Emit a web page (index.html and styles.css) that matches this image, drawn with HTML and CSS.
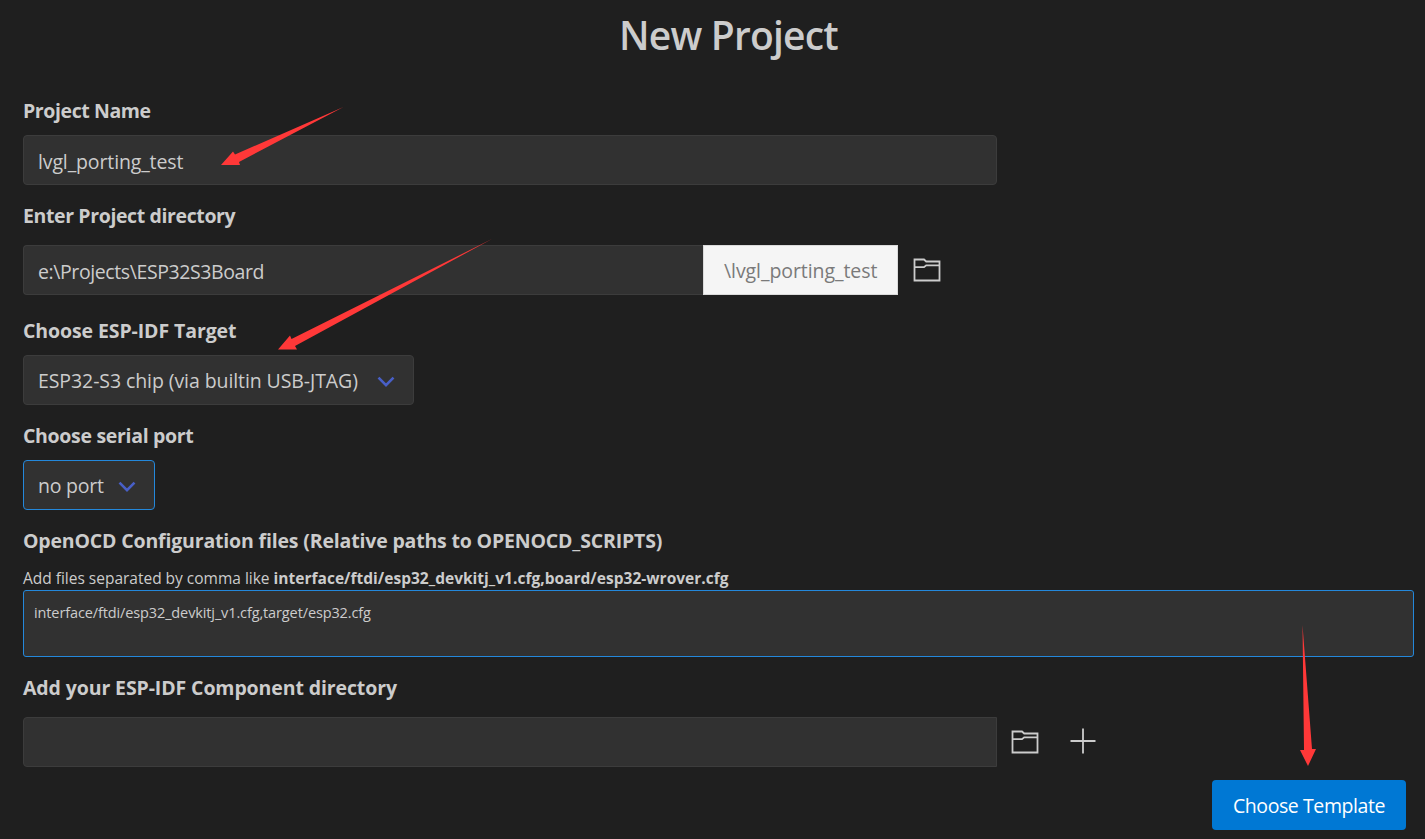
FILE: index.html
```html
<!DOCTYPE html>
<html lang="en">
<head>
<meta charset="utf-8">
<title>New Project</title>
<link rel="stylesheet" href="styles.css">
</head>
<body>
<main class="page">
  <h1 class="title"><span class="t-title">New Project</span></h1>
  <section class="field">
    <label class="label"><span class="t-name">Project Name</span></label>
    <div class="input wide"><span class="t-value">lvgl_porting_test</span></div>
  </section>
  <section class="field directory">
    <label class="label"><span class="t-dir">Enter Project directory</span></label>
    <div class="row">
      <div class="input path"><span class="t-path">e:\Projects\ESP32S3Board</span></div>
      <div class="suffix"><span class="t-suffix">\lvgl_porting_test</span></div>
      <svg class="folder" viewBox="0 0 28 24"><path d="M1.5 1.5H11L13.2 3.5H26.5V22.5H1.5ZM1.5 9.2H11L13.2 7.3H26.5"/></svg>
    </div>
  </section>
  <section class="field target">
    <label class="label"><span class="t-target">Choose ESP-IDF Target</span></label>
    <div class="input select chip"><span class="t-chip">ESP32-S3 chip (via builtin USB-JTAG)</span><svg class="chevron" viewBox="0 0 18 12"><path d="M1.500 1.700L9 9.200L16.500 1.700"/></svg></div>
  </section>
  <section class="field">
    <label class="label"><span class="t-serial">Choose serial port</span></label>
    <div class="input select port"><span class="t-port">no port</span><svg class="chevron" viewBox="0 0 18 12"><path d="M1.500 1.700L9 9.200L16.500 1.700"/></svg></div>
  </section>
  <section class="field openocd">
    <label class="label"><span class="t-ocd">OpenOCD Configuration files (Relative paths to OPENOCD_SCRIPTS)</span></label>
    <p class="hint"><span class="t-hint">Add files separated by comma like </span><b class="t-example">interface/ftdi/esp32_devkitj_v1.cfg,board/esp32-wrover.cfg</b></p>
    <div class="textarea"><span class="t-config">interface/ftdi/esp32_devkitj_v1.cfg,target/esp32.cfg</span></div>
  </section>
  <section class="field component">
    <label class="label"><span class="t-comp">Add your ESP-IDF Component directory</span></label>
    <div class="row">
      <div class="input wide square"></div>
      <svg class="folder" viewBox="0 0 28 24"><path d="M1.5 1.5H11L13.2 3.5H26.5V22.5H1.5ZM1.5 9.2H11L13.2 7.3H26.5"/></svg>
      <svg class="plus" viewBox="0 0 26 26"><path d="M13 .5V25.500M.5 13H25.500"/></svg>
    </div>
  </section>
  <footer class="actions"><button class="button"><span class="t-button">Choose Template</span></button></footer>
</main>
<svg class="arrows" viewBox="0 0 1425 839">
  <path d="M343.500 107L239 162L240 165H221L233 151.500L235 154.500Z"/>
  <path d="M492 239L295 346L297 349.500H278L290 335.500L291.500 339Z"/>
  <path d="M1302.500 625L1312 749H1316L1308 766L1300 750H1304Z"/>
</svg>
</body>
</html>
```
FILE: styles.css
```css
* { box-sizing: border-box; }
body { margin: 0; background: #1f1f1f; color: #ccc; font: 19.5px "Open Sans", "Noto Sans", sans-serif; }
.page { height: 839px; padding: 0 11px 0 23px; overflow: hidden; }
.title { margin: 0 0 26px 20px; height: 70px; line-height: 70px; text-align: center; font-size: 39px; font-weight: 600; }
.field { height: 105px; }
.label { display: block; height: 39px; line-height: 30px; font-weight: 700; white-space: nowrap; }
.input { height: 50px; border: 1px solid #3c3c3c; border-radius: 4px; background: #313131; padding: 0 14px; line-height: 52px; white-space: nowrap; }
.wide { width: 974px; }
.directory { height: 115px; }
.directory .label { height: 44px; }
.row { display: flex; align-items: center; }
.path { width: 680px; border-radius: 4px 0 0 4px; border-right: 0; }
.suffix { width: 195px; height: 50px; border: 1px solid #dbdbdb; background: #f5f5f5; color: #7a7a7a; padding-left: 20px; line-height: 50px; white-space: nowrap; }
.folder { width: 28px; height: 24px; margin-left: 15px; fill: none; stroke: #ccc; stroke-width: 1.8; }
.component .folder { margin-left: 14px; }
.plus { width: 26px; height: 26px; margin: 0 0 2px 31px; fill: none; stroke: #ccc; stroke-width: 1.8; }
.select { display: flex; align-items: center; justify-content: space-between; padding-top: 2px; padding-right: 18.5px; line-height: 48px; }
.chip { width: 391px; }
.port { width: 132px; border-color: #2488db; }
.chevron { width: 18px; height: 12px; margin-top: 1px; fill: none; stroke: #485fc7; stroke-width: 2.6; }
.openocd { height: 147px; }
.openocd .label { height: 40px; }
.hint { margin: 0; height: 24px; line-height: 24px; font-size: 15.5px; white-space: nowrap; }
.textarea { height: 67px; border: 1px solid #2488db; border-radius: 3px; background: #313131; padding: 11px 10px; font-size: 14.5px; line-height: 22px; }
.component { height: 107px; }
.component .label { height: 44px; }
.square { border-radius: 4px 0 0 4px; }
.actions { display: flex; justify-content: flex-end; padding-right: 8px; }
.button { width: 194px; height: 50px; border: 0; border-radius: 4px; background: #0078d4; color: #fff; font: inherit; padding: 0; white-space: nowrap; }
.arrows { position: absolute; left: 0; top: 0; width: 1425px; height: 839px; fill: #ff3838; pointer-events: none; }

/* Tracking per text run */
.t-title { letter-spacing: -0.8px; }
.t-name { letter-spacing: -0.4px; }
.t-value { letter-spacing: -0.13px; }
.t-dir { letter-spacing: -0.38px; }
.t-path { letter-spacing: -0.4px; }
.t-suffix { letter-spacing: -0.07px; }
.t-target { letter-spacing: -0.1px; }
.t-chip { letter-spacing: -0.085px; }
.t-serial { letter-spacing: -0.32px; }
.t-port { letter-spacing: -0.22px; }
.t-ocd { letter-spacing: -0.17px; }
.t-hint { white-space: pre; letter-spacing: -0.01px; }
.t-example { letter-spacing: 0.02px; }
.t-config { letter-spacing: -0.12px; }
.t-comp { letter-spacing: -0.11px; }
.t-button { letter-spacing: -0.42px; }
```
